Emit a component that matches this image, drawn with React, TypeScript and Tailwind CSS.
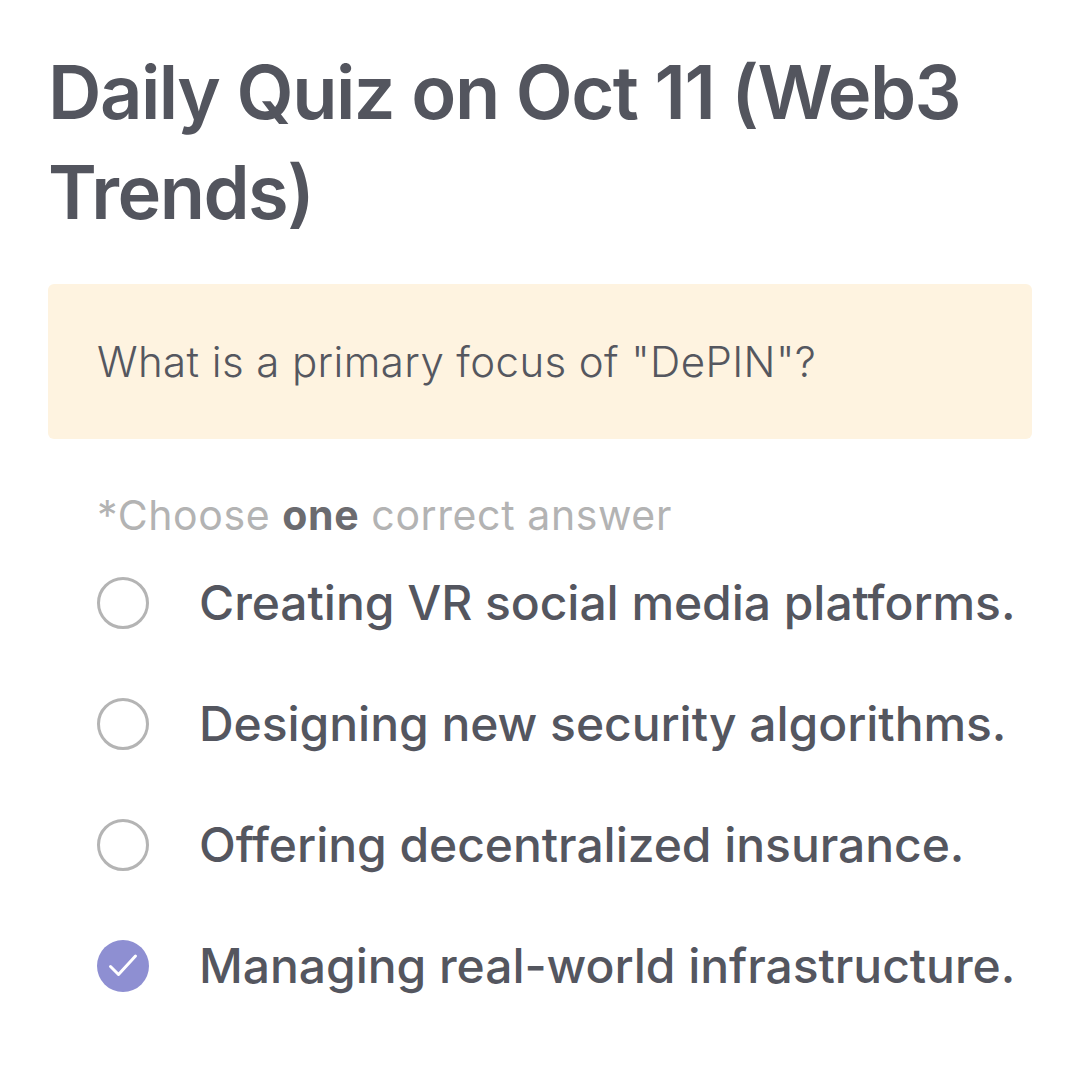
import React from "react";

const options = [
  { text: "Creating VR social media platforms.", checked: false },
  { text: "Designing new security algorithms.", checked: false },
  { text: "Offering decentralized insurance.", checked: false },
  { text: "Managing real-world infrastructure.", checked: true },
];

export default function App() {
  return (
    <div
      className="w-[1080px] h-[1071px] bg-white overflow-hidden px-[48px] pt-[42px]"
      style={{ fontFamily: "Inter, 'Noto Sans', sans-serif" }}
    >
      <h1 className="text-[74px] leading-[100px] font-semibold text-[#53555e] tracking-[-1.5px]">
        Daily Quiz on Oct 11 (Web3 Trends)
      </h1>
      <div className="mt-[42px] bg-[#fef3e0] rounded-[6px] h-[155px] flex items-center pl-[49px]">
        <p className="text-[42px] font-light text-[#55575f] tracking-[0.4px]">
          What is a primary focus of "DePIN"?
        </p>
      </div>
      <div className="pl-[49px] mt-[54px]">
        <p className="text-[41px] text-[#b3b3b3] leading-[44px] tracking-[0.6px]">
          *Choose <span className="font-bold text-[#6b6b6f]">one</span> correct answer
        </p>
        <div className="mt-[40px] flex flex-col gap-[69px]">
          {options.map((o) => (
            <div key={o.text} className="flex items-center h-[52px]">
              {o.checked ? (
                <div className="w-[52px] h-[52px] rounded-full bg-[#8e8fd2] flex items-center justify-center shrink-0">
                  <svg width="30" height="26" viewBox="0 0 30 26" fill="none" stroke="white" strokeWidth="3" strokeLinecap="round" strokeLinejoin="round">
                    <path d="M2.5 13.5l8 8L27.5 3" />
                  </svg>
                </div>
              ) : (
                <div className="w-[52px] h-[52px] rounded-full border-[3px] border-[#b4b4b4] shrink-0" />
              )}
              <span className="ml-[50px] text-[48px] font-medium text-[#54565f] whitespace-nowrap tracking-[-0.05px]">
                {o.text}
              </span>
            </div>
          ))}
        </div>
      </div>
    </div>
  );
}
